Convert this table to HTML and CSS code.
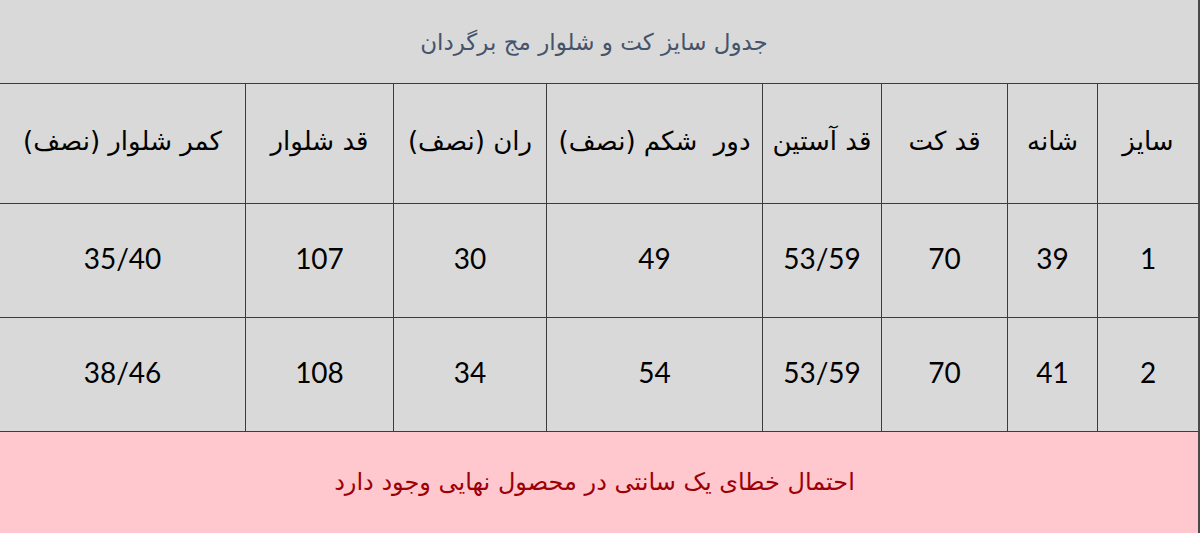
FILE: index.html
```html
<!DOCTYPE html>
<html lang="fa" dir="rtl">
<head>
<meta charset="utf-8">
<title>جدول سایز کت و شلوار مج برگردان</title>
<link rel="stylesheet" href="styles.css">
</head>
<body>
<div class="sheet">
  <div class="cell title">جدول سایز کت و شلوار مج برگردان</div>
  <div class="cell head">سایز</div>
  <div class="cell head">شانه</div>
  <div class="cell head">قد کت</div>
  <div class="cell head">قد آستین</div>
  <div class="cell head">دور&nbsp; شکم (نصف)</div>
  <div class="cell head">ران (نصف)</div>
  <div class="cell head">قد شلوار</div>
  <div class="cell head">کمر شلوار (نصف)</div>

  <div class="cell num">1</div>
  <div class="cell num">39</div>
  <div class="cell num">70</div>
  <div class="cell num">53/59</div>
  <div class="cell num">49</div>
  <div class="cell num">30</div>
  <div class="cell num">107</div>
  <div class="cell num">35/40</div>

  <div class="cell num">2</div>
  <div class="cell num">41</div>
  <div class="cell num">70</div>
  <div class="cell num">53/59</div>
  <div class="cell num">54</div>
  <div class="cell num">34</div>
  <div class="cell num">108</div>
  <div class="cell num">38/46</div>

  <div class="cell note">احتمال خطای یک سانتی در محصول نهایی وجود دارد</div>
</div>
</body>
</html>
```
FILE: styles.css
```css
html, body {
  margin: 0;
  padding: 0;
  background: #d9d9d9;
}

body {
  width: 1200px;
  height: 533px;
  overflow: hidden;
}

.sheet {
  direction: rtl;
  display: grid;
  grid-template-columns: 100px 89px 125px 118px 215px 152px 147px 245px;
  grid-template-rows: 83px 119px 113px 113px 101px;
  gap: 1px;
  background: #3c3c3c;
  border-right: 2px solid #4a4a4a;
  width: 1198px;
  height: 533px;
}

.cell {
  background: #d9d9d9;
  display: flex;
  align-items: center;
  justify-content: center;
  font-family: "DejaVu Sans", sans-serif;
  color: #000;
  white-space: nowrap;
}

.title {
  grid-column: 1 / -1;
  color: #44546a;
  font-size: 23px;
  padding-right: 10px;
}

.head {
  font-size: 26px;
  padding-bottom: 6px;
}

.num {
  font-family: "Lato", "DejaVu Sans", sans-serif;
  font-size: 28px;
  direction: ltr;
  padding-bottom: 6px;
}

.note {
  grid-column: 1 / -1;
  background: #ffc7ce;
  color: #9c0006;
  font-size: 24px;
  padding-right: 9px;
  padding-bottom: 2px;
}
```
